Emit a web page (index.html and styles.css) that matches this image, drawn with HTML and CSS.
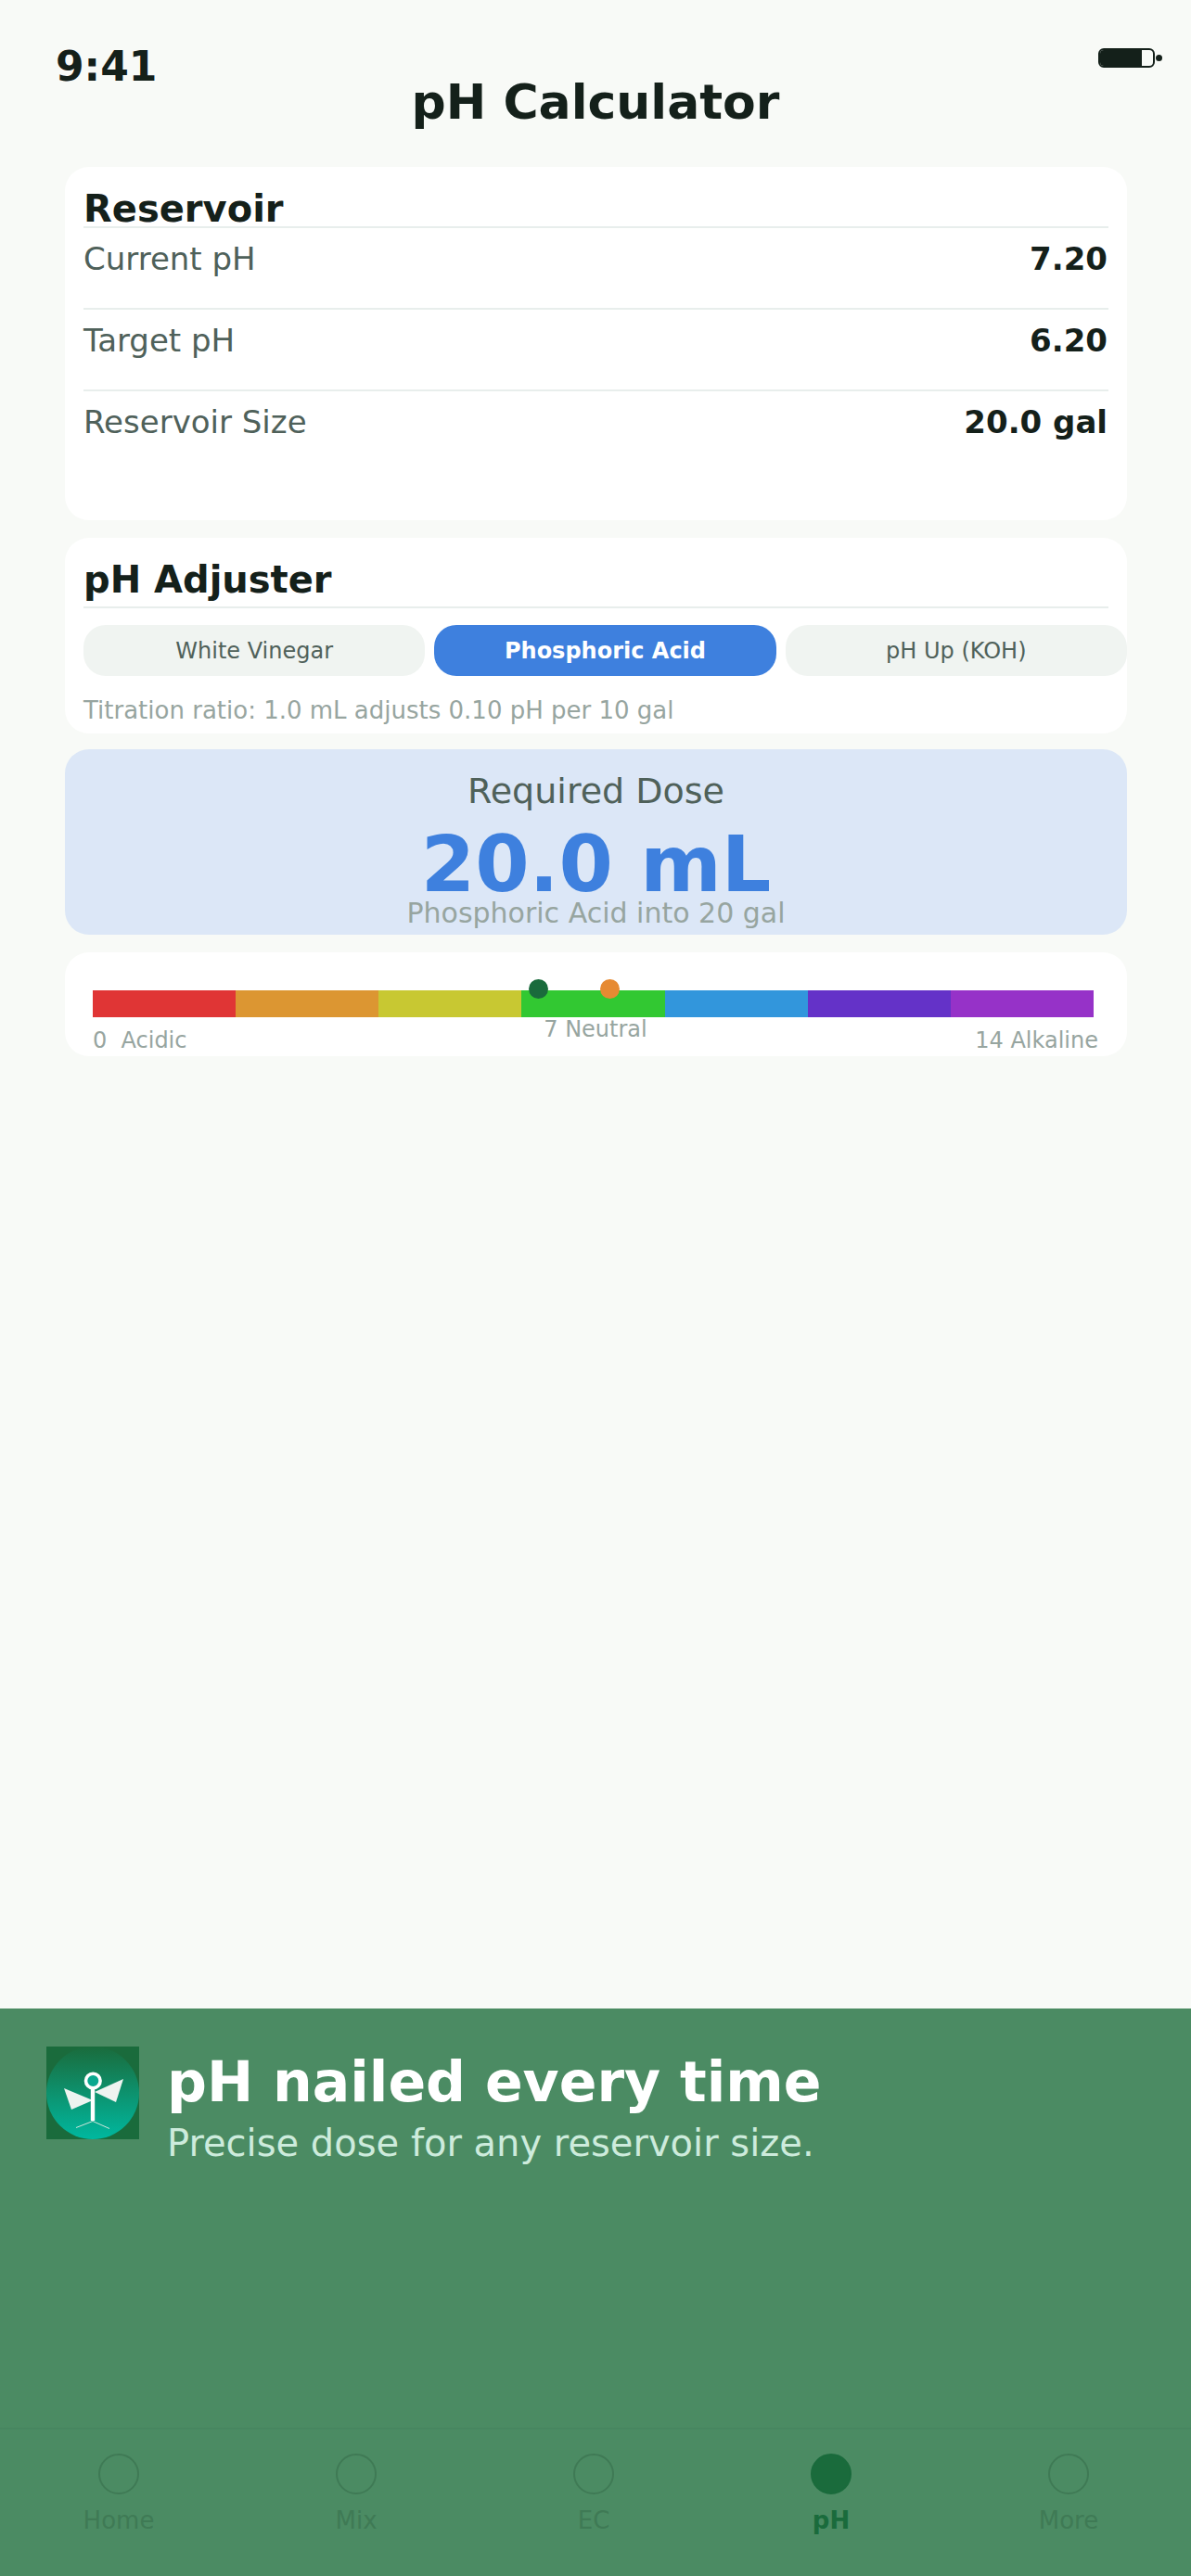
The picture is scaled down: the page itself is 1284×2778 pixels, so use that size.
FILE: index.html
```html
<!DOCTYPE html>
<html lang="en">
<head>
    <meta charset="UTF-8">
    <meta name="viewport" content="width=device-width, initial-scale=1.0">
    <title>pH Calculator</title>
    <link rel="stylesheet" href="styles.css">
</head>
<body>
    <div class="status-bar">
        <span class="time">9:41</span>
        <div class="battery-wrap">
            <div class="battery"><div class="battery-fill"></div></div>
            <div class="battery-tip"></div>
        </div>
    </div>
    <h1 class="page-title">pH Calculator</h1>

    <div class="content">
        <div class="card reservoir">
            <h2 class="card-title">Reservoir</h2>
            <div class="row"><span class="row-label">Current pH</span><span class="row-value">7.20</span></div>
            <div class="row"><span class="row-label">Target pH</span><span class="row-value">6.20</span></div>
            <div class="row last"><span class="row-label">Reservoir Size</span><span class="row-value">20.0 gal</span></div>
        </div>

        <div class="card adjuster">
            <h2 class="card-title">pH Adjuster</h2>
            <div class="pills">
                <div class="pill">White Vinegar</div>
                <div class="pill active">Phosphoric Acid</div>
                <div class="pill">pH Up (KOH)</div>
            </div>
            <div class="note">Titration ratio: 1.0 mL adjusts 0.10 pH per 10 gal</div>
        </div>

        <div class="dose">
            <div class="dose-label">Required Dose</div>
            <div class="dose-value">20.0 mL</div>
            <div class="dose-sub">Phosphoric Acid into 20 gal</div>
        </div>

        <div class="card scale">
            <div class="scale-bar">
                <div class="seg red"></div>
                <div class="seg orange"></div>
                <div class="seg yellow"></div>
                <div class="seg green"></div>
                <div class="seg blue"></div>
                <div class="seg indigo"></div>
                <div class="seg violet"></div>
                <div class="dot dot-target"></div>
                <div class="dot dot-current"></div>
            </div>
            <div class="scale-labels">
                <span class="scale-end">0&nbsp; Acidic</span>
                <span>7 Neutral</span>
                <span class="scale-end right">14 Alkaline</span>
            </div>
        </div>
    </div>

    <div class="banner">
        <svg class="logo" viewBox="0 0 100 100">
            <defs>
                <linearGradient id="logoGrad" x1="0" y1="0" x2="0" y2="1">
                    <stop offset="0" stop-color="#1a6b3c"/>
                    <stop offset="1" stop-color="#00b89f"/>
                </linearGradient>
            </defs>
            <rect width="100" height="100" fill="#1a6b3c"/>
            <circle cx="50" cy="50" r="50" fill="url(#logoGrad)"/>
            <polygon points="19,45 50,58 27,68" fill="#eef3f0"/>
            <polygon points="83,35 52,49 75,60" fill="#eef3f0"/>
            <rect x="47.8" y="40" width="4.4" height="40" fill="#fff"/>
            <path d="M50 80.5 L32 87.5 M50 80.5 L68 88.5" stroke="#cfe6dc" stroke-width="1" fill="none"/>
            <circle cx="50.3" cy="37" r="7.8" fill="#0aa88f" stroke="#fff" stroke-width="3.6"/>
        </svg>
        <div class="banner-text">
            <div class="banner-title">pH nailed every time</div>
            <div class="banner-sub">Precise dose for any reservoir size.</div>
        </div>
    </div>

    <div class="tab-bar">
        <div class="tab"><div class="tab-icon"></div><span>Home</span></div>
        <div class="tab"><div class="tab-icon"></div><span>Mix</span></div>
        <div class="tab"><div class="tab-icon"></div><span>EC</span></div>
        <div class="tab active"><div class="tab-icon"></div><span>pH</span></div>
        <div class="tab"><div class="tab-icon"></div><span>More</span></div>
    </div>
</body>
</html>
```

FILE: styles.css
```css
* {
    box-sizing: border-box;
}
html, body {
    margin: 0;
    padding: 0;
}
body {
    position: relative;
    width: 1284px;
    height: 2778px;
    overflow: hidden;
    background-color: #f8faf7;
    color: #14201a;
    font-family: "DejaVu Sans", sans-serif;
}
.status-bar {
    display: flex;
    justify-content: space-between;
    align-items: flex-start;
    height: 72px;
    padding: 46px 31px 0 60px;
}
.time {
    font-size: 44px;
    line-height: 52px;
    font-weight: bold;
}
.battery-wrap {
    display: flex;
    align-items: center;
    gap: 1px;
    margin-top: 6px;
}
.battery {
    width: 61px;
    height: 21px;
    border: 2px solid #14201a;
    border-radius: 6px;
    overflow: hidden;
}
.battery-fill {
    width: 79%;
    height: 100%;
    background-color: #14201a;
}
.battery-tip {
    width: 7px;
    height: 7px;
    border-radius: 50%;
    background-color: #14201a;
}
.page-title {
    margin: 0;
    height: 108px;
    font-size: 52px;
    line-height: 76px;
    text-align: center;
}
.content {
    display: flex;
    flex-direction: column;
    gap: 19px;
    width: 1145px;
    margin-left: 70px;
}
.card {
    background-color: #fff;
    border-radius: 26px;
    padding: 0 20px;
}
.card-title {
    margin: 0;
    padding-top: 24px;
    height: 66px;
    font-size: 40px;
    line-height: 43px;
    border-bottom: 2px solid #e8eeec;
}
.reservoir {
    height: 381px;
}
.row {
    display: flex;
    justify-content: space-between;
    height: 88px;
    padding-top: 12px;
    padding-right: 1px;
    font-size: 34px;
    line-height: 42px;
    border-bottom: 2px solid #e8eeec;
}
.row.last {
    border-bottom: none;
}
.row-label {
    color: #4f615a;
}
.row-value {
    font-weight: bold;
}
.adjuster {
    height: 211px;
}
.adjuster .card-title {
    height: 76px;
}
.pills {
    display: flex;
    gap: 10px;
    margin-top: 18px;
    margin-right: -20px;
}
.pill {
    flex: 1;
    height: 55px;
    border-radius: 24px;
    background-color: #f0f4f1;
    color: #4f615a;
    font-size: 24px;
    line-height: 57px;
    text-align: center;
}
.pill.active {
    background-color: #3e80de;
    color: #fff;
    font-weight: bold;
}
.note {
    margin-top: 20px;
    font-size: 26px;
    line-height: 34px;
    color: #97a5a0;
}
.dose {
    height: 200px;
    margin-top: -2px;
    background-color: #dce7f7;
    border-radius: 26px;
    text-align: center;
    padding-top: 22px;
}
.dose-label {
    font-size: 38px;
    line-height: 46px;
    color: #4f615a;
}
.dose-value {
    font-size: 84px;
    line-height: 94px;
    font-weight: bold;
    color: #3e80de;
    margin-top: 9px;
}
.dose-sub {
    font-size: 30px;
    line-height: 34px;
    color: #97a5a0;
    margin-top: -11px;
}
.scale {
    height: 112px;
    padding: 41px 36px 0 30px;
}
.scale-bar {
    position: relative;
    display: flex;
    height: 29px;
}
.seg {
    flex: 1;
}
.red { background-color: #e03535; }
.orange { background-color: #dc9632; }
.yellow { background-color: #c8c832; }
.green { background-color: #32c832; }
.blue { background-color: #3296dc; }
.indigo { background-color: #6432c8; }
.violet { background-color: #9632c8; }
.dot {
    position: absolute;
    top: -12px;
    width: 21px;
    height: 21px;
    border-radius: 50%;
}
.dot-target {
    left: 470px;
    background-color: #1a6b3c;
}
.dot-current {
    left: 547px;
    background-color: #e68a32;
}
.scale-labels {
    display: grid;
    grid-template-columns: 1fr auto 1fr;
    margin-right: -5px;
    font-size: 24px;
    line-height: 26px;
    color: #97a5a0;
}
.scale-end {
    margin-top: 12px;
}
.scale-end.right {
    text-align: right;
}
.banner {
    position: absolute;
    left: 0;
    right: 0;
    bottom: 0;
    height: 612px;
    display: flex;
    align-items: flex-start;
    gap: 30px;
    padding: 41px 50px 0;
    background-color: #4b8b63;
}
.logo {
    width: 100px;
    height: 100px;
    flex-shrink: 0;
}
.banner-text {
    padding-top: 2px;
}
.banner-title {
    font-size: 60px;
    line-height: 72px;
    font-weight: bold;
    color: #fff;
}
.banner-sub {
    margin-top: 5px;
    font-size: 40px;
    line-height: 50px;
    color: #cdebdc;
}
.tab-bar {
    position: absolute;
    left: 0;
    right: 0;
    bottom: 0;
    height: 160px;
    display: flex;
    padding-right: 4px;
    border-top: 2px solid #478660;
}
.tab {
    flex: 1;
    display: flex;
    flex-direction: column;
    align-items: center;
    padding-top: 26px;
    font-size: 26px;
    line-height: 36px;
    color: #3f7a55;
}
.tab-icon {
    width: 44px;
    height: 44px;
    border-radius: 50%;
    border: 2px solid #3f7a55;
    margin-bottom: 10px;
}
.tab.active {
    color: #1a6b3c;
    font-weight: bold;
}
.tab.active .tab-icon {
    background-color: #1a6b3c;
    border-color: #1a6b3c;
}
```
